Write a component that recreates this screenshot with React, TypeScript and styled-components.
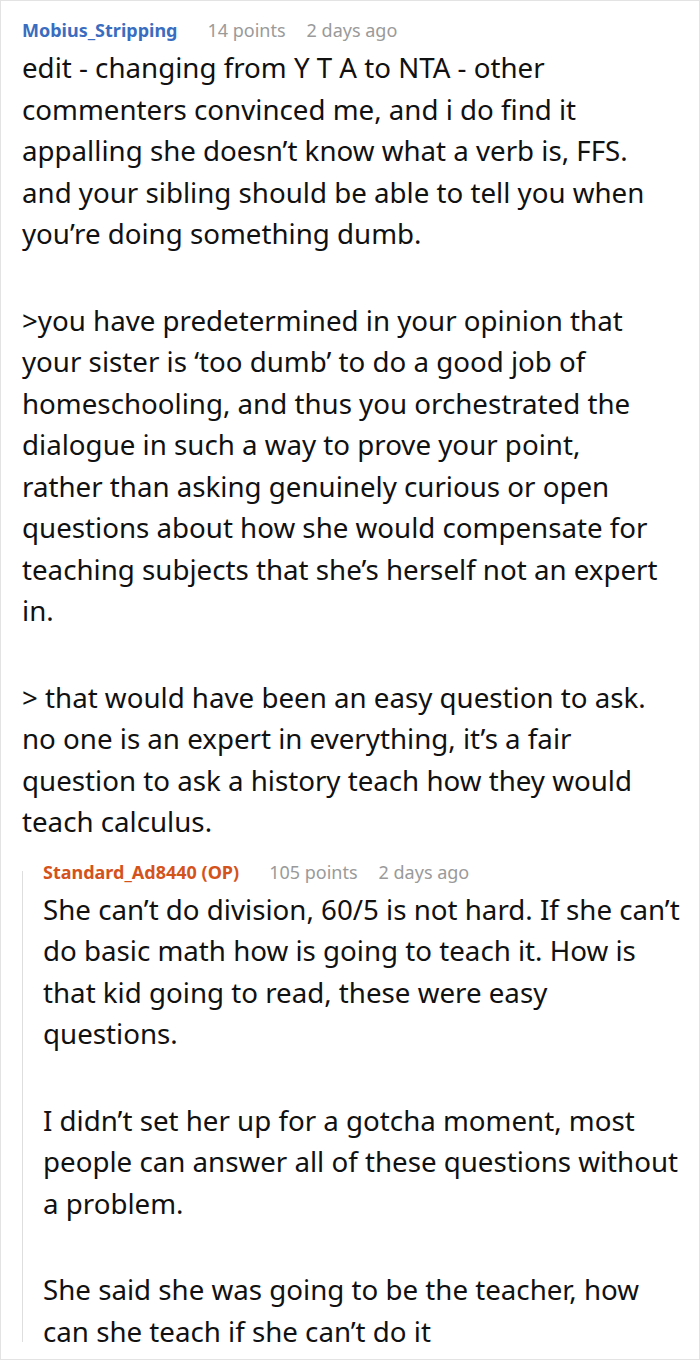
import React from 'react';
import styled, { createGlobalStyle } from 'styled-components';

const GlobalStyle = createGlobalStyle`
  html, body {
    margin: 0;
    padding: 0;
    background: #ffffff;
  }
  body {
    font-family: 'Noto Sans', 'Open Sans', sans-serif;
    color: #111111;
  }
`;

const Page = styled.div`
  box-sizing: border-box;
  width: 700px;
  height: 1360px;
  border: 1px solid #e3e3e3;
  padding: 17px 14px 0 21px;
  overflow: hidden;
`;

const Comment = styled.div`
  display: flex;
  flex-direction: column;
`;

const Header = styled.div`
  display: flex;
  align-items: center;
  height: 24px;
  font-size: 18px;
  line-height: 24px;
  white-space: nowrap;
`;

const Author = styled.span<{ $op?: boolean }>`
  font-weight: 700;
  color: ${(p) => (p.$op ? '#d4531c' : '#3a6dbf')};
  margin-right: 30px;
`;

const Meta = styled.span`
  color: #9a9a9a;
  margin-right: 21px;
`;

const Body = styled.div<{ $narrow?: boolean }>`
  margin-top: 5px;
  max-width: ${(p) => (p.$narrow ? '639px' : 'none')};
  font-size: 27.7px;
  line-height: 41.5px;
  color: #111111;
`;

const Paragraph = styled.p`
  margin: 0 0 45px;
  &:last-child {
    margin-bottom: 0;
  }
`;

const Thread = styled.div`
  display: flex;
  margin-top: 17px;
`;

const ThreadLine = styled.div`
  flex: 0 0 1px;
  margin: 11px 0 10px;
  background: #dedede;
`;

const ThreadBody = styled.div`
  flex: 1;
  padding-left: 20px;
`;

interface CommentData {
  author: string;
  op?: boolean;
  points: number;
  age: string;
  paragraphs: string[];
}

const parent: CommentData = {
  author: 'Mobius_Stripping',
  points: 14,
  age: '2 days ago',
  paragraphs: [
    'edit - changing from Y T A to NTA - other commenters convinced me, and i do find it appalling she doesn’t know what a verb is, FFS. and your sibling should be able to tell you when you’re doing something dumb.',
    '>you have predetermined in your opinion that your sister is ‘too dumb’ to do a good job of homeschooling, and thus you orchestrated the dialogue in such a way to prove your point, rather than asking genuinely curious or open questions about how she would compensate for teaching subjects that she’s herself not an expert in.',
    '> that would have been an easy question to ask. no one is an expert in everything, it’s a fair question to ask a history teach how they would teach calculus.',
  ],
};

const reply: CommentData = {
  author: 'Standard_Ad8440 (OP)',
  op: true,
  points: 105,
  age: '2 days ago',
  paragraphs: [
    'She can’t do division, 60/5 is not hard. If she can’t do basic math how is going to teach it. How is that kid going to read, these were easy questions.',
    'I didn’t set her up for a gotcha moment, most people can answer all of these questions without a problem.',
    'She said she was going to be the teacher, how can she teach if she can’t do it',
  ],
};

const CommentBlock = ({
  data,
  narrow,
  children,
}: {
  data: CommentData;
  narrow?: boolean;
  children?: React.ReactNode;
}) => (
  <Comment>
    <Header>
      <Author $op={data.op}>{data.author}</Author>
      <Meta>{data.points} points</Meta>
      <Meta>{data.age}</Meta>
    </Header>
    <Body $narrow={narrow}>
      {data.paragraphs.map((text, i) => (
        <Paragraph key={i}>{text}</Paragraph>
      ))}
    </Body>
    {children}
  </Comment>
);

export default function App() {
  return (
    <>
      <GlobalStyle />
      <Page>
        <CommentBlock data={parent} narrow>
          <Thread>
            <ThreadLine />
            <ThreadBody>
              <CommentBlock data={reply} />
            </ThreadBody>
          </Thread>
        </CommentBlock>
      </Page>
    </>
  );
}
